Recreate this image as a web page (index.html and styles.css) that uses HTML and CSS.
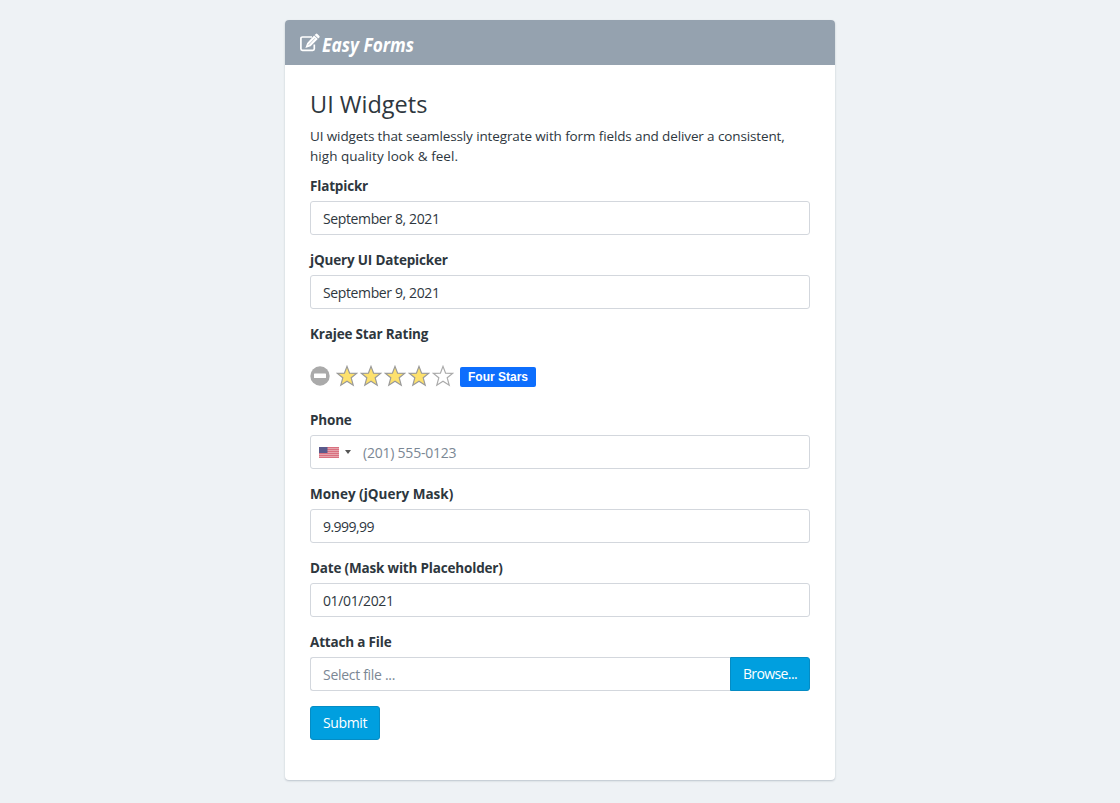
FILE: index.html
```html
<!DOCTYPE html>
<html lang="en">
<head>
<meta charset="utf-8">
<title>Easy Forms</title>
<link rel="stylesheet" href="styles.css">
</head>
<body>
<svg class="defs" width="0" height="0">
  <symbol id="star" viewBox="0 0 22 22"><path d="M11 1.400 13.600 8.100 20.600 8.400 15.200 12.800 17.200 20.200 11 16.200 4.800 20.200 6.800 12.800 1.400 8.400 8.400 8.100Z"/></symbol>
</svg>
<main class="card">
  <header class="card-header">
    <svg class="brand-icon" viewBox="0 0 22 22"><path class="box" d="M13 4H3.500Q1.900 4 1.900 5.600V15.800Q1.900 17.400 3.500 17.400H13.700Q15.300 17.400 15.300 15.800V11.500"/><path d="M6.400 14.900 8.200 9.900 15.100 2.600 18.800 6 11.600 13.200ZM15.700 2 16.800 .9Q17.600 .3 18.400 1L20.400 2.900Q21 3.600 20.400 4.400L19.300 5.400Z"/><path class="cut" d="M9.300 12.200 16 5.200"/></svg>
    <svg class="brand-name" viewBox="0 0 98 32"><text x="1" y="25" textLength="92" lengthAdjust="spacingAndGlyphs">Easy Forms</text></svg>
  </header>
  <form class="form">
    <h1 class="title">UI Widgets</h1>
    <p class="lead">UI widgets that seamlessly integrate with form fields and deliver a consistent,<br><span class="lead-end">high quality look &amp; feel.</span></p>
    <div class="group"><label class="label">Flatpickr</label><div class="control">September 8, 2021</div></div>
    <div class="group"><label class="label">jQuery UI Datepicker</label><div class="control">September 9, 2021</div></div>
    <div class="group rating-group">
      <label class="label">Krajee Star Rating</label>
      <div class="rating">
        <svg class="clear" viewBox="0 0 20 20"><circle cx="10" cy="10" r="9.700"/><rect x="4" y="7.500" width="12" height="4.500" rx=".6"/></svg>
        <svg class="star"><use href="#star"/></svg>
        <svg class="star"><use href="#star"/></svg>
        <svg class="star"><use href="#star"/></svg>
        <svg class="star"><use href="#star"/></svg>
        <svg class="star empty"><use href="#star"/></svg>
        <span class="badge">Four Stars</span>
      </div>
    </div>
    <div class="group"><label class="label">Phone</label>
      <div class="control phone">
        <svg class="flag" viewBox="0 0 20 11"><rect width="20" height="11" fill="#e5a3ac"/><path d="M0 .5H20M0 2.500H20M0 4.500H20M0 6.500H20M0 8.500H20M0 10.500H20" stroke="#d9707f"/><rect width="8.500" height="6" fill="#5a5a8c"/></svg>
        <span class="caret"></span><span class="placeholder">(201) 555-0123</span>
      </div>
    </div>
    <div class="group"><label class="label spaced">Money (jQuery Mask)</label><div class="control tight">9.999,99</div></div>
    <div class="group"><label class="label">Date (Mask with Placeholder)</label><div class="control">01/01/2021</div></div>
    <div class="group"><label class="label">Attach a File</label>
      <div class="file"><div class="control file-name placeholder">Select file ...</div><button type="button" class="btn browse">Browse...</button></div>
    </div>
    <button type="button" class="btn submit">Submit</button>
  </form>
</main>
</body>
</html>
```
FILE: styles.css
```css
* { box-sizing: border-box; }
body { margin: 0; padding: 20px 0; background: #eef2f5; color: #2e373e; font: 14px/20px "Open Sans", "Noto Sans", sans-serif; letter-spacing: -0.22px; }
.defs { position: absolute; }
.card { width: 550px; height: 760px; margin: 0 auto; background: #fff; border-radius: 4px; box-shadow: 0 1px 2px rgba(70, 90, 110, .3); overflow: hidden; }
.card-header { display: flex; align-items: center; height: 45px; padding-left: 14px; background: #95a2af; }
.brand-icon { width: 22px; height: 22px; margin-top: 2px; fill: #fff; }
.brand-icon .box { fill: none; stroke: #fff; stroke-width: 1.7; }
.brand-icon .cut { fill: none; stroke: #95a2af; stroke-width: .6; }
.brand-name { width: 98px; height: 32px; overflow: visible; fill: #fff; font: italic 700 20px/24px "Open Sans", sans-serif; letter-spacing: 0; }
.form { padding: 25px; }
.title { margin: -1px 0 7px; font-size: 23.5px; line-height: 30px; font-weight: 400; letter-spacing: 0; }
.lead { margin: 0 0 10px; white-space: nowrap; font-size: 13.5px; letter-spacing: -0.12px; }
.lead-end { letter-spacing: 0.04px; }
.group { margin-bottom: 15px; }
.label { display: block; margin-bottom: 5px; font-size: 13.5px; font-weight: 700; letter-spacing: -0.18px; }
.spaced { letter-spacing: 0; }
.control { display: flex; align-items: center; height: 34px; padding: 2px 12px 0; border: 1px solid #d3d7dd; border-radius: 3px; background: #fff; letter-spacing: -0.38px; }
.tight { letter-spacing: -0.55px; }
.rating-group { margin-bottom: 14px; }
.rating { display: flex; align-items: center; height: 47px; padding-top: 6px; }
.clear { width: 20px; height: 20px; margin-right: 5px; fill: #aaa; }
.clear rect { fill: #fff; }
.star { width: 22px; height: 22px; margin: 0 1px; fill: #fde16d; stroke: #999; stroke-width: 1.2; }
.empty { fill: #fff; stroke: #aaa; }
.badge { width: 76px; height: 20px; margin: 2px 0 0 5px; border-radius: 2px; background: #0d6efd; color: #fff; font: bold 12px/20px "Liberation Sans", Arial, sans-serif; letter-spacing: 0; text-align: center; }
.phone { padding-left: 8px; letter-spacing: -0.22px; }
.flag { width: 20px; height: 11px; margin-top: -2px; }
.caret { margin: -2px 12px 0 6px; border: 3px solid transparent; border-top: 4px solid #555; border-bottom: 0; }
.placeholder { color: #7b8794; }
.file { display: flex; }
.file-name { flex: 1; border-right: 0; border-radius: 3px 0 0 3px; letter-spacing: -0.3px; }
.btn { height: 34px; padding: 0; border: 1px solid #058cc4; border-radius: 3px; background: #009fdf; color: #fff; font: inherit; letter-spacing: -0.35px; }
.browse { width: 80px; border-radius: 0 3px 3px 0; letter-spacing: -0.6px; }
.submit { display: block; width: 70px; }
```
